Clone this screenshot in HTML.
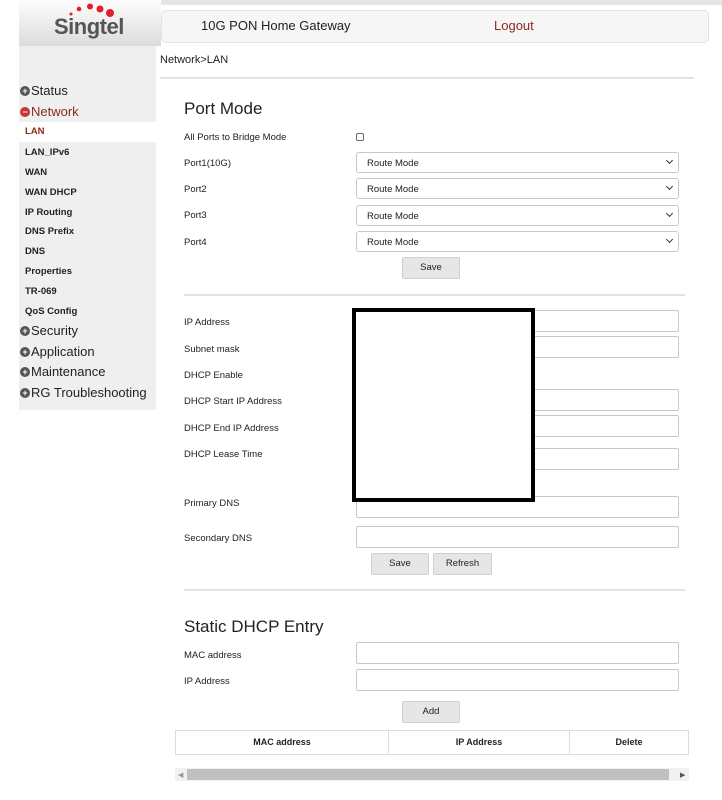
<!DOCTYPE html>
<html><head><meta charset="utf-8"><style>
*{box-sizing:border-box}
body{margin:0;width:722px;height:800px;background:#fff;font-family:"Liberation Sans",sans-serif;position:relative;overflow:hidden;color:#222}
.a{position:absolute}
.topline{left:161px;top:0;width:561px;height:5px;background:#e6e6e6}
.logo{left:19px;top:0;width:142px;height:46px;background:linear-gradient(#fdfdfd,#dcdcdc)}
.side{left:19px;top:46px;width:137px;height:364px;background:#efefef}
.hdr{left:161px;top:10px;width:548px;height:33px;background:#f6f6f6;border:1px solid #e2e2e2;border-radius:5px}
.it{position:absolute;left:25px;font-size:9.5px;font-weight:bold;color:#222}
.big{position:absolute;left:20px;font-size:13px;color:#222}
.pl{display:inline-block;width:10px;height:10px;border-radius:50%;background:#555;color:#fff;font-size:9px;line-height:10px;text-align:center;font-weight:bold;vertical-align:1px;margin-right:1px}
.lbl{position:absolute;left:184px;font-size:9.5px;color:#222}
.inp{position:absolute;left:356px;width:323px;height:22px;border:1px solid #c8c8c8;border-radius:2px;background:#fff}
.sel{position:absolute;left:356px;width:323px;height:21px;border:1px solid #c8c8c8;border-radius:3px;background:#fff;font-size:9.5px;padding:5px 10px}
.sel:after{content:"";position:absolute;right:6px;top:5px;width:4px;height:4px;border-right:1.5px solid #333;border-bottom:1.5px solid #333;transform:rotate(45deg)}
.btn{position:absolute;height:22px;background:#e6e6e6;border:1px solid #d0d0d0;border-radius:2px;font-size:9.5px;text-align:center;line-height:20px}
.hr{position:absolute;height:2px;background:#e2e2e2}
h2{position:absolute;margin:0;font-weight:normal;font-size:17px;left:184px;color:#222}
</style></head><body>
<div class="a topline"></div>
<div class="a logo"></div>
<div class="a" style="left:54px;top:14px;font-size:22px;font-weight:bold;color:#555;letter-spacing:-0.5px">Singtel</div>
<svg class="a" style="left:68px;top:3px" width="50" height="14"><circle cx="3" cy="11" r="1.5" fill="#e0202a"/><circle cx="11" cy="6" r="2.3" fill="#e0202a"/><circle cx="22" cy="3.5" r="3" fill="#e0202a"/><circle cx="32" cy="6" r="3.5" fill="#e0202a"/><circle cx="42" cy="10" r="4" fill="#e0202a"/></svg>
<div class="a hdr"></div>
<div class="a" style="left:201px;top:18px;font-size:13px;color:#222">10G PON Home Gateway</div>
<div class="a" style="left:494px;top:18px;font-size:13px;color:#8b2a1e">Logout</div>
<div class="a" style="left:160px;top:54px;font-size:11px">Network&gt;LAN</div>
<div class="hr" style="left:160px;top:77px;width:534px"></div>
<div class="a side"></div>
<div class="a" style="left:19px;top:122px;width:137px;height:20px;background:#fff"></div>
<div class="big" style="top:83px"><span class="pl">+</span>Status</div>
<div class="big" style="top:104px;color:#8b2a1e"><span class="pl" style="background:#c0392b">−</span>Network</div>
<div class="it" style="top:126px;color:#8b2a1e">LAN</div>
<div class="it" style="top:147px">LAN_IPv6</div>
<div class="it" style="top:167px">WAN</div>
<div class="it" style="top:187px">WAN DHCP</div>
<div class="it" style="top:207px">IP Routing</div>
<div class="it" style="top:226px">DNS Prefix</div>
<div class="it" style="top:246px">DNS</div>
<div class="it" style="top:266px">Properties</div>
<div class="it" style="top:286px">TR-069</div>
<div class="it" style="top:306px">QoS Config</div>
<div class="big" style="top:323px"><span class="pl">+</span>Security</div>
<div class="big" style="top:344px"><span class="pl">+</span>Application</div>
<div class="big" style="top:364px"><span class="pl">+</span>Maintenance</div>
<div class="big" style="top:385px"><span class="pl">+</span>RG Troubleshooting</div>

<h2 style="top:99px">Port Mode</h2>
<div class="lbl" style="top:132px">All Ports to Bridge Mode</div>
<div class="a" style="left:356px;top:133px;width:8px;height:8px;border:1px solid #666;border-radius:2px"></div>
<div class="lbl" style="top:158px">Port1(10G)</div><div class="sel" style="top:152px">Route Mode</div>
<div class="lbl" style="top:184px">Port2</div><div class="sel" style="top:178px">Route Mode</div>
<div class="lbl" style="top:210px">Port3</div><div class="sel" style="top:205px">Route Mode</div>
<div class="lbl" style="top:237px">Port4</div><div class="sel" style="top:231px">Route Mode</div>
<div class="btn" style="left:402px;top:257px;width:58px">Save</div>
<div class="hr" style="left:184px;top:294px;width:501px"></div>

<div class="lbl" style="top:317px">IP Address</div><div class="inp" style="top:310px"></div>
<div class="lbl" style="top:344px">Subnet mask</div><div class="inp" style="top:336px"></div>
<div class="lbl" style="top:370px">DHCP Enable</div>
<div class="lbl" style="top:396px">DHCP Start IP Address</div><div class="inp" style="top:389px"></div>
<div class="lbl" style="top:423px">DHCP End IP Address</div><div class="inp" style="top:415px"></div>
<div class="lbl" style="top:449px">DHCP Lease Time</div><div class="inp" style="top:448px"></div>
<div class="lbl" style="top:498px">Primary DNS</div><div class="inp" style="top:496px"></div>
<div class="lbl" style="top:533px">Secondary DNS</div><div class="inp" style="top:526px"></div>
<div class="a" style="left:352px;top:308px;width:183px;height:194px;border:4px solid #000;background:#fff"></div>
<div class="btn" style="left:371px;top:553px;width:58px">Save</div>
<div class="btn" style="left:433px;top:553px;width:59px">Refresh</div>
<div class="hr" style="left:184px;top:589px;width:501px"></div>

<h2 style="top:617px">Static DHCP Entry</h2>
<div class="lbl" style="top:650px">MAC address</div><div class="inp" style="top:642px"></div>
<div class="lbl" style="top:676px">IP Address</div><div class="inp" style="top:669px"></div>
<div class="btn" style="left:402px;top:701px;width:58px">Add</div>
<div class="a" style="left:175px;top:730px;width:514px;height:25px;border:1px solid #ddd;font-size:9px;font-weight:bold">
<div class="a" style="left:0;top:0;width:213px;height:23px;border-right:1px solid #ddd;text-align:center;line-height:23px">MAC address</div>
<div class="a" style="left:213px;top:0;width:181px;height:23px;border-right:1px solid #ddd;text-align:center;line-height:23px">IP Address</div>
<div class="a" style="left:394px;top:0;width:118px;height:23px;text-align:center;line-height:23px">Delete</div>
</div>
<div class="a" style="left:175px;top:768px;width:514px;height:13px;background:#f1f1f1"></div>
<div class="a" style="left:187px;top:769px;width:482px;height:11px;background:#c0c0c0"></div>
<div class="a" style="left:178px;top:771px;font-size:7px;color:#999">◀</div>
<div class="a" style="left:680px;top:771px;font-size:7px;color:#555">▶</div>
</body></html>
